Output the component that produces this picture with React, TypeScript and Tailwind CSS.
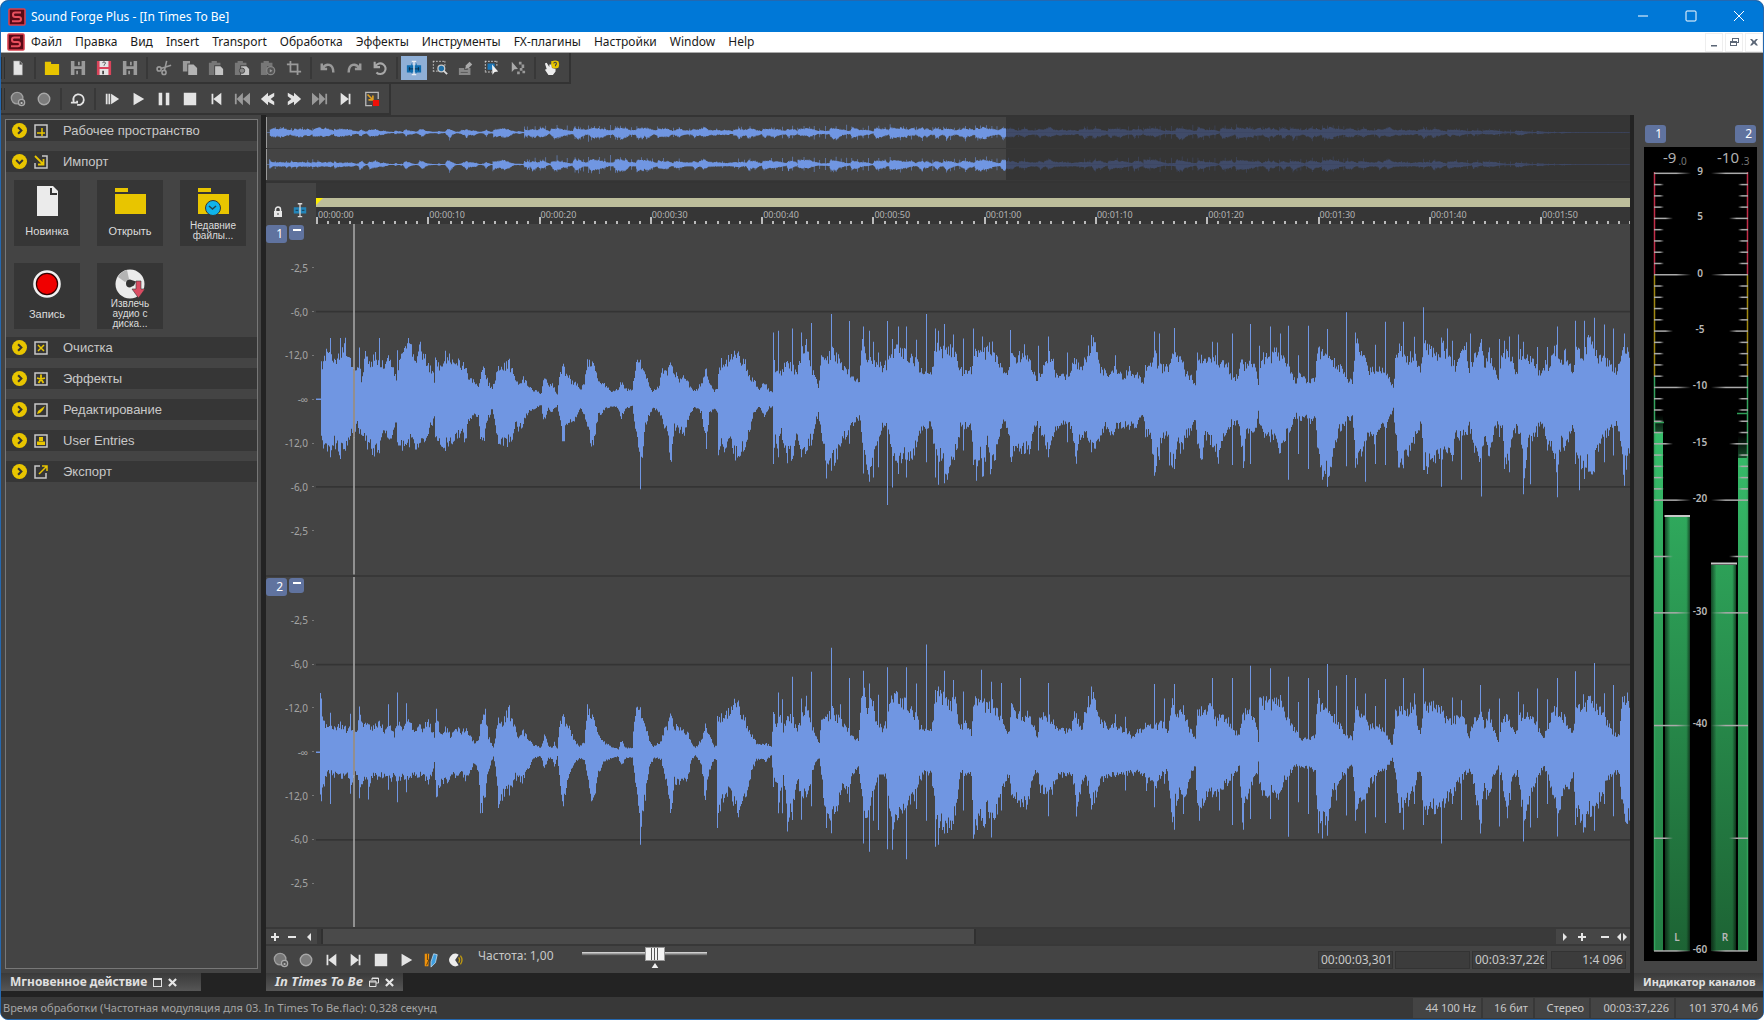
import React from 'react';

const WAVE_WIDTH = 1314;
const WAVE_HALF = 174;

// Peak data: "x,top,bottom" triples. Every track is sampled in two parts.
const TRACKS = [
  {
    id: 1,
    zero: 329,
    parts: [
      {
        offset: -6,
        scale: 2.376,
        body:
          '14,329,329 23,329,329 25,200,457 28,235,450 38,190,490 50,200,480 58,208,458 70,195,485 82,165,475 90,200,440 104,235,430 111,230,400 118,230,430 122,268,428 130,200,458 138,215,468 148,215,480 155,195,490 165,215,460 178,218,432 186,190,460 196,230,435 204,270,395 208,230,455 218,185,465 228,178,460 234,157,468 243,190,440 252,200,468 262,172,468 270,195,465 278,225,440 282,240,405 290,232,400 295,280,378 298,212,440 310,225,460 320,200,465 335,205,455 350,205,445 358,225,425 368,230,450 376,262,400 390,275,378 400,290,375 406,250,465 414,235,440 422,280,385 432,297,355 440,270,398 446,230,465 455,235,460 465,222,455 473,225,455 482,240,440 488,278,390 495,280,425 506,265,400 515,285,370 528,300,360 540,305,350 548,312,348 554,262,395 565,285,358 575,285,365 586,314,345 593,240,400 602,228,465 608,250,400 620,275,400 632,278,378 641,300,352 652,275,375 658,218,405 668,207,470 676,245,430 684,270,378 700,285,355 712,305,350 730,300,352 738,275,385 748,300,355 766,300,350 772,240,410 777,205,435 786,225,520 793,245,420 804,280,378 812,303,355 826,290,365 838,235,400 848,245,430 857,215,512 866,245,410 876,275,425 890,258,425 900,290,372 914,305,350 930,280,370 940,240,460 948,285,370 960,302,355 966,300,370 970,240,520 976,215,465 986,220,480 995,208,460 1005,200,480 1016,185,515 1026,215,470 1036,225,465 1046,265,410 1056,275,365 1066,300,350 1078,275,375 1090,305,350 1098,306,350 1099,200,470 1104,240,445 1112,230,480 1120,250,430 1132,215,500 1146,232,490 1158,248,440 1166,190,495 1178,170,470 1190,240,450 1200,262,400 1208,288,370 1214,210,440 1226,215,515 1238,180,525 1250,195,500 1262,225,450 1275,240,430 1290,260,400 1304,270,382 1312,160,450 1318,195,515 1326,210,530 1336,220,500 1348,210,450 1360,230,405 1372,220,400 1382,200,480 1396,165,520 1410,180,500 1420,200,520 1430,200,495 1445,225,450 1456,255,410 1475,250,405 1486,170,500 1500,180,505 1512,185,555 1524,180,530 1535,205,470 1545,235,430 1552,250,420 1560,240,405 1568,235,410',
        spikes:
          '47,147,500 72,147,505 116,175,430 163,147,488 207,183,455 472,208,455 785,225,595 1099,130,520 1111,125,500 1133,215,518 1145,118,505 1167,130,500 1178,150,470 1190,102,465 1227,215,563 1237,75,540 1281,96,460 1313,112,548 1327,125,573 1337,158,560 1349,190,530 1371,96,642 1382,150,590 1397,112,550 1416,112,560 1440,152,470 1463,75,515 1484,118,560 1492,125,582 1507,105,577 1528,136,500 1551,150,480',
      },
      {
        offset: 644,
        scale: 2.306,
        body:
          '0,240,400 8,245,410 25,240,415 30,175,510 38,185,545 45,185,500 52,190,535 62,175,460 70,165,530 80,190,500 88,205,440 100,250,395 112,240,430 118,190,495 130,200,480 145,190,480 160,210,485 168,250,425 178,270,405 188,240,440 202,200,490 212,190,460 218,250,420 235,260,400 252,265,395 262,200,460 268,215,500 276,235,440 285,215,430 295,180,450 302,150,485 315,180,475 323,235,430 335,245,410 350,250,430 358,235,410 375,260,405 390,240,410 405,255,405 415,265,380 423,278,385 426,235,430 440,230,435 448,180,550 456,230,480 468,235,435 480,230,440 490,195,530 500,195,460 512,205,485 520,250,440 532,262,420 542,290,395 546,200,470 556,205,510 566,215,440 578,215,460 585,190,460 595,220,500 605,215,440 616,220,430 624,265,400 640,260,400 648,205,470 652,225,530 660,225,430 672,215,425 682,245,420 688,290,370 696,200,430 706,200,450 716,210,430 726,165,450 738,200,480 750,210,440 762,240,420 775,285,375 782,240,390 798,278,378 810,270,400 818,270,380 824,180,480 836,190,540 848,200,560 860,215,480 872,225,420 885,250,415 890,270,390 905,275,385 912,160,510 920,170,500 930,205,470 942,240,430 955,240,450 970,240,415 988,260,400 998,295,355 1002,215,430 1010,170,510 1022,190,510 1034,205,490 1046,190,440 1056,235,425 1062,230,400 1067,160,520 1080,180,515 1092,175,500 1104,200,490 1112,150,510 1124,200,475 1136,210,480 1144,240,435 1156,185,440 1166,170,440 1174,240,410 1186,205,470 1200,150,540 1208,225,440 1218,180,500 1230,235,430 1240,268,400 1250,190,420 1262,190,530 1274,215,440 1284,260,410 1292,190,440 1300,185,550 1310,210,440 1322,220,450 1338,255,395 1348,220,430 1358,230,460 1368,185,480 1376,170,560 1386,215,460 1396,190,480 1406,220,420 1414,250,410 1420,180,500 1436,205,530 1446,150,530 1460,165,540 1470,200,490 1484,210,440 1500,225,420 1512,240,400 1522,210,450 1530,140,540 1536,180,520 1545,200,490',
        spikes:
          '7,148,480 30,118,510 38,185,570 50,142,558 116,123,500 148,165,490 180,170,480 202,142,500 246,190,455 302,140,485 357,198,415 447,127,555 460,133,508 482,230,525 493,117,535 580,158,470 592,160,500 627,133,523 653,225,532 669,105,520 690,170,400 715,112,455 738,133,487 757,110,567 779,198,490 802,110,535 834,190,567 846,120,588 890,70,527 912,130,528 934,205,573 957,167,520 979,98,523 1022,98,533 1046,143,460 1067,55,520 1077,180,550 1110,145,588 1122,118,480 1134,155,512 1156,185,567 1177,133,430 1201,150,617 1244,150,440 1255,155,535 1265,142,545 1286,136,430 1299,158,610 1315,200,580 1330,173,440 1354,173,480 1376,112,619 1418,95,520 1427,200,598 1439,95,565 1463,86,545 1485,106,515 1506,118,495 1532,133,585',
      },
    ],
  },
  {
    id: 2,
    zero: 368,
    parts: [
      {
        offset: -6,
        scale: 2.376,
        body:
          '14,368,368 21,368,368 24,210,510 30,280,470 40,295,430 60,290,435 72,285,440 85,300,430 95,290,465 104,300,430 112,300,430 117,235,495 128,290,440 140,285,460 150,295,440 163,270,440 175,300,435 187,280,450 200,318,440 207,270,460 218,300,440 232,275,450 244,300,430 255,290,440 268,295,435 278,275,460 290,300,435 295,325,400 299,245,495 308,310,460 325,295,450 333,320,435 345,285,440 358,305,430 370,300,450 380,318,420 390,340,400 400,330,420 406,285,545 415,245,490 422,320,420 434,355,380 440,325,405 447,265,525 456,285,505 466,250,480 473,245,490 484,285,440 492,325,445 503,300,455 515,325,420 530,345,385 545,352,378 550,352,385 555,315,415 565,348,385 574,355,385 580,340,410 588,356,378 594,265,460 602,260,520 610,285,455 620,310,420 630,335,395 640,350,385 650,335,390 658,235,430 668,245,500 676,290,480 684,310,430 695,335,395 712,350,385 732,358,380 738,330,410 748,355,385 766,355,382 771,270,440 777,225,520 786,250,575 795,290,500 805,330,415 815,350,385 826,338,385 834,338,390 840,290,430 848,290,460 857,245,560 864,290,450 874,295,460 884,305,462 895,308,450 905,340,390 914,355,375 928,330,400 938,290,510 948,320,420 960,350,385 966,350,390 970,260,580 978,260,500 988,250,510 998,250,470 1006,225,520 1017,212,555 1026,260,510 1038,285,480 1048,315,425 1060,340,390 1072,345,385 1080,340,395 1096,352,375 1099,250,460 1108,285,450 1114,240,500 1124,300,430 1134,260,560 1146,265,530 1158,300,450 1168,260,500 1178,230,500 1190,285,440 1200,318,400 1210,335,385 1214,280,440 1226,265,570 1240,240,560 1250,260,540 1262,275,480 1275,295,480 1290,320,430 1302,328,405 1310,220,480 1316,190,580 1324,240,590 1334,215,510 1345,270,460 1360,295,430 1368,280,440 1380,210,590 1394,195,560 1410,210,550 1420,225,530 1434,250,500 1448,285,450 1460,305,430 1475,300,430 1486,205,560 1496,190,590 1508,210,600 1520,230,580 1530,200,560 1540,270,470 1555,295,430 1568,295,430',
        spikes:
          '25,208,512 47,250,520 95,253,490 117,232,498 138,285,507 185,225,478 207,190,515 229,222,485 299,238,500 405,285,548 415,238,500 447,265,532 472,228,495 601,260,527 785,250,642 968,260,592 1111,190,548 1122,210,548 1133,260,602 1145,143,568 1167,208,567 1178,200,500 1190,128,527 1227,265,592 1237,57,607 1259,225,480 1281,147,515 1313,125,638 1327,163,663 1337,215,570 1349,197,598 1371,115,655 1382,210,657 1416,115,685 1440,163,535 1463,47,570 1484,183,648 1492,172,642 1507,125,608 1528,153,580 1551,188,540',
      },
      {
        offset: 644,
        scale: 2.306,
        body:
          '0,300,420 10,270,440 25,310,430 30,200,600 45,215,565 55,220,590 62,225,510 72,225,600 85,235,540 95,270,480 105,300,455 114,310,430 118,220,520 132,250,510 145,265,515 155,250,540 166,280,450 178,320,420 184,250,480 200,265,500 212,265,480 222,290,445 240,305,435 255,300,430 262,240,470 270,265,540 280,300,460 290,230,440 302,185,520 315,240,485 325,275,450 345,290,435 362,290,430 380,300,430 395,318,430 410,305,430 425,290,430 428,285,470 440,295,445 450,290,470 465,280,435 478,310,420 488,210,560 496,260,520 505,240,490 515,240,530 525,290,460 536,310,420 542,330,410 546,250,540 556,240,530 568,250,500 580,220,480 590,275,500 602,255,480 614,265,460 630,300,440 644,318,410 650,260,580 660,240,500 670,250,470 684,300,430 688,340,395 692,220,460 704,210,520 718,220,480 726,200,490 738,210,510 748,250,450 760,275,430 770,300,405 788,330,410 805,325,415 818,320,430 824,210,550 834,230,570 846,240,570 858,260,490 870,270,460 885,315,430 905,325,405 912,240,540 922,250,500 935,275,510 945,290,460 962,285,430 980,310,420 997,348,385 1002,250,430 1012,240,540 1024,240,520 1036,240,510 1046,210,470 1056,305,425 1062,300,440 1068,220,560 1078,240,540 1090,215,530 1104,230,540 1112,240,540 1122,275,510 1134,265,490 1148,270,460 1160,260,440 1174,320,420 1180,285,440 1198,240,590 1208,290,480 1218,240,510 1230,300,440 1240,335,410 1250,270,450 1262,260,560 1274,300,450 1286,310,420 1290,260,470 1300,250,580 1312,260,490 1325,280,460 1345,325,410 1355,285,440 1368,240,500 1378,240,560 1390,260,480 1404,290,470 1414,305,440 1420,240,540 1436,230,590 1450,210,540 1464,230,560 1476,240,500 1490,275,460 1505,310,430 1520,315,430 1526,180,530 1534,200,580 1545,230,560',
        spikes:
          '7,187,540 49,122,570 72,158,605 95,162,540 138,147,530 202,162,557 268,265,558 302,178,530 357,255,440 380,262,480 447,165,530 471,208,460 493,165,597 514,228,550 550,240,570 580,147,500 598,255,540 627,147,583 653,250,597 669,110,565 690,205,460 715,118,565 757,143,618 779,218,515 802,147,550 825,183,607 834,230,623 846,105,615 868,170,510 891,138,555 912,147,570 934,193,607 957,230,560 979,150,577 1022,147,597 1046,192,520 1067,118,583 1110,240,638 1134,205,520 1156,213,568 1199,168,608 1244,208,587 1286,188,440 1299,225,632 1315,260,590 1330,178,562 1354,210,520 1376,147,617 1418,127,583 1437,195,605 1463,102,600 1485,192,520 1506,168,557 1537,190,580',
      },
    ],
  },
];

type Column = [number, number];

const parse = (s: string) => s.split(' ').map((p) => p.split(',').map(Number));

const noise = (n: number) => {
  const v = Math.sin(n * 127.1 + 11.7) * 43758.5453;
  return v - Math.floor(v);
};

const buildColumns = (track: (typeof TRACKS)[number]): Column[] => {
  const columns: Column[] = Array.from({ length: WAVE_WIDTH }, () => [0, 0]);
  track.parts.forEach(({ offset, scale, body, spikes }) => {
    const points = parse(body);
    const toX = (v: number) => Math.round(v / scale + offset);
    for (let i = 0; i < points.length - 1; i++) {
      const [ax, at, ab] = points[i];
      const [bx, bt, bb] = points[i + 1];
      const from = toX(ax);
      const to = toX(bx);
      for (let x = Math.max(0, from); x < Math.min(to, WAVE_WIDTH); x++) {
        const k = (x - from) / (to - from);
        const up = (track.zero - (at + (bt - at) * k)) / 3;
        const down = (ab + (bb - ab) * k - track.zero) / 3;
        columns[x] = [up * (0.8 + noise(x) * 0.32), down * (0.8 + noise(x + 4000 * track.id) * 0.32)];
      }
    }
    parse(spikes).forEach(([sx, top, bottom]) => {
      const x = toX(sx);
      if (!columns[x]) return;
      columns[x] = [
        Math.max(columns[x][0], (track.zero - top) / 3),
        Math.max(columns[x][1], (bottom - track.zero) / 3),
      ];
    });
  });
  return columns;
};

const COLUMNS = TRACKS.map(buildColumns);

// The part of the file to the right of the visible range
const TAIL = COLUMNS.map((columns) =>
  Array.from({ length: 1103 }, (_, i): Column => {
    const [up, down] = columns[700 + (i % 600)];
    const fade = i < 720 ? 1 : Math.max(0.04, 1 - (i - 720) / 300);
    return [up * fade + 1, down * fade + 1];
  })
);

const wavePath = (columns: Column[]) => {
  const top = columns.map(([up], x) => `V${(WAVE_HALF - up).toFixed(1)}H${x + 1}`).join('');
  const bottom = columns
    .map(([, down], x) => `V${(WAVE_HALF + down + 0.6).toFixed(1)}H${x}`)
    .reverse()
    .join('');
  return `M0 ${WAVE_HALF}${top}${bottom}Z`;
};

type IconProps = { children: React.ReactNode; size?: string };

const Icon: React.FC<IconProps> = ({ children, size = 'size-[18px]' }) => (
  <svg viewBox="0 0 18 18" className={`${size} shrink-0`} fill="none" stroke="none" aria-hidden="true">
    {children}
  </svg>
);

const Logo: React.FC = () => (
  <svg viewBox="0 0 18 18" className="size-[18px] shrink-0" aria-hidden="true">
    <rect x="1" y="1" width="16" height="16" rx="1" fill="#5a0a16" stroke="#d9404f" strokeWidth="1.6" />
    <path d="M13 4.5H7.2a2.2 2.2 0 0 0 0 4.4h3.6a2.2 2.2 0 0 1 0 4.4H4" fill="none" stroke="#e8505e" strokeWidth="2" />
  </svg>
);

const LIGHT = '#e4e4e4';
const MUTED = '#9a9a9a';
const YELLOW = '#e8c500';

const ICONS: Record<string, React.ReactNode> = {
  file: <path d="M4 1h7l3 3v13H4z M11 1v4h3" fill={LIGHT} stroke="#8a8a8a" strokeWidth=".6" />,
  folder: <path d="M1 2h7v2.500h9V17H1z" fill={YELLOW} />,
  save: <path d="M1 1h16v16H1z M5 1h8v6H5z M5 10h8v7H5z M9 2h2v4H9z M7 12h2v4H7z" fill={MUTED} fillRule="evenodd" />,
  saveAs: (
    <>
      <path d="M1 1h16v16H1z" fill="#d9445a" />
      <path d="M4 1h10v7H4z M4 10h10v7H4z" fill={LIGHT} />
      <path d="M7 12h2v4H7z" fill="#444" />
      <path d="M7.500 3.500a1.500 1.500 0 1 1 2 1.500L9 6.500" stroke="#444" />
    </>
  ),
  cut: (
    <g stroke={MUTED} strokeWidth="1.800">
      <circle cx="3.500" cy="10" r="2.300" />
      <circle cx="9" cy="14" r="2.300" />
      <path d="M5.500 9.500 17 6M9.500 12 12 1" />
    </g>
  ),
  copy: (
    <>
      <path d="M1 1h8v3H6v9H1z" fill={MUTED} />
      <path d="M7 5h6l4 4v8H7z" fill="#b4b4b4" />
    </>
  ),
  paste: (
    <>
      <path d="M1 3h3V1h6v2h4v3H7v11H1z" fill="#777" />
      <path d="M8 7h6l3 3v7H8z" fill="#c4c4c4" />
    </>
  ),
  pasteNew: (
    <>
      <path d="M1 3h3V1h6v2h4v3H7v11H1z" fill="#777" />
      <path d="M8 7h6l3 3v7H8z" fill="#c4c4c4" />
      <circle cx="9" cy="12" r="3" fill="#888" stroke="#444" />
    </>
  ),
  mix: (
    <>
      <path d="M1 3h3V1h6v2h4v4H8v10H1z" fill="#777" />
      <circle cx="12" cy="12" r="4.500" fill="#555" stroke="#888" strokeWidth="1.500" />
      <path d="m11 10 3 2-3 2z" fill="#999" />
    </>
  ),
  crop: <path d="M5 1v12h12M1 5h12v12" stroke={MUTED} strokeWidth="2" />,
  undo: <path d="M2 4v6h6M3 9c4-6 12-5 12 5" stroke={MUTED} strokeWidth="2.800" />,
  redo: <path d="M16 4v6h-6M15 9C11 3 3 4 3 14" stroke={MUTED} strokeWidth="2.800" />,
  repeat: <path d="M3 2v6h6M4 7a6 6 0 1 1 1 7" stroke="#a8a8a8" strokeWidth="2.400" />,
  edit: (
    <>
      <path d="M1 6h5V4h1v2h4V4h1v2h5v8h-5v1h-1v-1H7v1H6v-1H1z" fill="#0f6cae" />
      <path d="M3 10h12M4 8v4M14 8v4" stroke="#0a2f50" />
      <path d="M6.500 1.500H9m0 0h2.500M9 1.500v15m-2.500 0h5" stroke="#e6ecf3" strokeWidth="1.500" />
    </>
  ),
  magnify: (
    <>
      <path d="M1 1.500h14M1.500 1v12M14.500 1v6M1 12.500h6" stroke="#c8c8c8" strokeDasharray="2 1.500" />
      <circle cx="10.500" cy="9.500" r="3.800" fill="#1d6fa8" stroke="#c8c8c8" strokeWidth="1.500" />
      <path d="m13 12 4 4" stroke="#d8d8d8" strokeWidth="2" />
    </>
  ),
  pencil: (
    <>
      <path d="M1 9h6v2h4V9h3v8H1z" fill="#888" />
      <path d="m8 10 1-4 4-4 3 3-4 4z" fill="#aaa" />
      <path d="M3 14h8" stroke="#555" />
    </>
  ),
  marquee: (
    <>
      <path d="M1 1.500h14M1.500 1v12M14.500 1v6M1 13.500h8" stroke="#d8d8d8" strokeDasharray="2 1.500" />
      <path d="M4 4h8v7H4z" fill="#1a76b8" />
      <path d="m9 5 7 8-4 .500-2.500 3z" fill="#f0f0f0" />
    </>
  ),
  event: (
    <>
      <path d="m2 2 7 8-4 .500-3 3z" fill="#aaa" />
      <path d="M10 2h3v3h-3zM13 5h3v4h-3zM11 9h3v3h-3zM8 13h3v3H8zM14 12h3v3h-3z" fill="#999" />
    </>
  ),
  help: (
    <>
      <path d="M8 1h8v8h-6z" fill={YELLOW} />
      <circle cx="12.500" cy="5" r="4.500" fill={YELLOW} />
      <path d="M11 4a1.500 1.500 0 1 1 2 1.500V7" stroke="#444" strokeWidth="1.200" />
      <path d="m1 4 2-1 3 5V5h2l1 4 4 1v3l-3 4H5L1 11l2-1z" fill="#ededed" />
    </>
  ),
  recordRemote: (
    <>
      <circle cx="8" cy="8" r="6.500" fill="#777" stroke="#a0a0a0" strokeWidth="1.500" />
      <circle cx="13" cy="13" r="3.500" fill="#555" stroke="#aaa" strokeWidth="1.400" />
      <path d="M12 12.500h2v2h-2z" fill="#bbb" />
    </>
  ),
  record: <circle cx="9" cy="9" r="6.500" fill="#7c7c7c" stroke="#a8a8a8" strokeWidth="1.500" />,
  loop: <path d="M8 15.500A6 6 0 1 0 4 12M4 8v6M1 13h7v-2" stroke={LIGHT} strokeWidth="2" />,
  playAll: <path d="M2 3h2v12H2zM5 3h2v12H5zM8 3l9 6-9 6z" fill={LIGHT} />,
  play: <path d="M4 2l12 7-12 7z" fill={LIGHT} />,
  pause: <path d="M3 2h4v14H3zM11 2h4v14h-4z" fill={LIGHT} />,
  stop: <path d="M2 2h14v14H2z" fill={LIGHT} />,
  start: <path d="M4 3h2v12H4zM15 2v14L6 9z" fill={LIGHT} />,
  prev: <path d="M1 3h2v12H1zM10 2v14L3 9zM18 2v14L10 9z" fill={MUTED} />,
  rewind: <path d="M9 2v4l7-4v4l-4 3 4 3v4l-7-4v4L1 9z" fill={LIGHT} />,
  forward: <path d="M9 2v4L2 2v4l4 3-4 3v4l7-4v4l8-7z" fill={LIGHT} />,
  next: <path d="M15 3h2v12h-2zM8 2v14l7-7zM0 2v14l8-7z" fill={MUTED} />,
  end: <path d="M12 3h2v12h-2zM3 2v14l9-7z" fill={LIGHT} />,
  region: (
    <>
      <path d="M2 10V1.500h14V9M2 9v7.500h7" stroke="#b8b8b8" strokeWidth="1.500" />
      <path d="m4 4 6 6M10 5v5H5" stroke="#e0a020" strokeWidth="1.800" />
      <path d="M10 10h7v7h-7z" fill="#f01008" />
    </>
  ),
  repair: (
    <>
      <path d="M2 2h5l-1 14H2z" fill="#f0920c" />
      <path d="M5 2v7M7 8 4 15" stroke="#5a3a08" />
      <path d="m12 2 4 1-2 9-5 5V11z" fill="#3f9fe0" stroke="#cfe6f5" strokeWidth=".8" />
    </>
  ),
  speaker: (
    <>
      <path d="M12 3a7 7 0 1 0 0 12L8 9z" fill="#ededed" />
      <path d="M12 6q2 3 0 6M14 4q3.500 5 0 10" stroke="#c09a10" strokeWidth="1.500" />
    </>
  ),
};

const FILE_TOOLS = [
  ['file', 'New'],
  null,
  ['folder', 'Open'],
  ['save', 'Save'],
  ['saveAs', 'Save as'],
  ['save', 'Save all'],
  null,
  ['cut', 'Cut'],
  ['copy', 'Copy'],
  ['paste', 'Paste'],
  ['pasteNew', 'Paste to new'],
  ['mix', 'Mix'],
  ['crop', 'Trim'],
  null,
  ['undo', 'Undo'],
  ['redo', 'Redo'],
  ['repeat', 'Repeat'],
  null,
  ['edit', 'Edit tool'],
  ['magnify', 'Magnify tool'],
  ['pencil', 'Pencil tool'],
  ['marquee', 'Selection tool'],
  ['event', 'Event tool'],
  null,
  ['help', 'Help'],
];

const TRANSPORT_TOOLS = [
  ['recordRemote', 'Remote record'],
  ['record', 'Record'],
  null,
  ['loop', 'Loop playback'],
  null,
  ['playAll', 'Play all'],
  ['play', 'Play'],
  ['pause', 'Pause'],
  ['stop', 'Stop'],
  ['start', 'Go to start'],
  ['prev', 'Previous marker'],
  ['rewind', 'Rewind'],
  ['forward', 'Forward'],
  ['next', 'Next marker'],
  ['end', 'Go to end'],
  ['region', 'Drop region'],
];

const MINI_TRANSPORT = ['recordRemote', 'record', 'start', 'end', 'stop', 'play', 'repair', 'speaker'];

const MENU = [
  'Файл',
  'Правка',
  'Вид',
  'Insert',
  'Transport',
  'Обработка',
  'Эффекты',
  'Инструменты',
  'FX-плагины',
  'Настройки',
  'Window',
  'Help',
];

const Toolbar: React.FC<{ tools: (string[] | null)[]; active?: string }> = ({ tools, active }) => (
  <div className="flex">
    <div className="flex h-[31px] items-center border-r-2 border-b-2 border-[#333] pr-1">
      <span className="h-[22px] w-1 border-x border-[#2f2f2f]" />
      {tools.map((tool, index) =>
        tool ? (
          <button
            key={index}
            type="button"
            aria-label={tool[1]}
            className={`flex h-6 w-[26px] items-center justify-center ${tool[0] === active ? 'bg-[#8fafd6]' : ''}`}
          >
            <Icon size="size-4">{ICONS[tool[0]]}</Icon>
          </button>
        ) : (
          <span key={index} className="mx-[3px] h-[22px] w-0.5 bg-[#383838]" />
        )
      )}
    </div>
  </div>
);

const SectionHeader: React.FC<{ title: string; icon: React.ReactNode; open?: boolean }> = ({ title, icon, open }) => (
  <button
    type="button"
    aria-expanded={!!open}
    className="flex h-[21px] w-full shrink-0 items-center bg-[#363636] pl-1.5 font-['Liberation_Sans',sans-serif] text-[13px] text-[#c8c8c8]"
  >
    <svg viewBox="0 0 16 16" className="size-[15px]" fill="none" aria-hidden="true">
      <circle cx="8" cy="8" r="8" fill={YELLOW} />
      <path d={open ? 'm4.500 6.500 3.500 3.500 3.500-3.500' : 'm6.500 4.500 3.500 3.500-3.500 3.500'} stroke="#333" strokeWidth="2.200" />
    </svg>
    <svg viewBox="0 0 14 14" className="mr-[15px] ml-[7px] size-3.5" fill="none" aria-hidden="true">
      {icon}
    </svg>
    {title}
  </button>
);

const box = <path d="M1 1h12v12H1z" stroke="#c8c8c8" strokeWidth="1.500" />;

const SECTION_ICONS = {
  workspace: (
    <>
      {box}
      <path d="M3 9h8M8 4v8" stroke={YELLOW} strokeWidth="1.500" />
    </>
  ),
  importing: (
    <>
      <path d="M8 1h5v12H1V8" stroke="#c8c8c8" strokeWidth="1.500" />
      <path d="m1 1 8 8M9.500 4v5.500H4" stroke={YELLOW} strokeWidth="1.800" />
    </>
  ),
  cleaning: (
    <>
      {box}
      <path d="m4 4 6 6M10 4l-6 6" stroke={YELLOW} strokeWidth="1.500" />
    </>
  ),
  effects: (
    <>
      {box}
      <path d="M7 2.500v4.500M3 6l4 1 4-1M4.500 11 7 7l2.500 4" stroke={YELLOW} strokeWidth="1.800" />
    </>
  ),
  editing: (
    <>
      {box}
      <path d="m3 11 1-3 4-3 3-2-2 4-3 3z" fill={YELLOW} />
    </>
  ),
  entries: (
    <>
      {box}
      <path d="M5 3h4v4H5zM3 7.500h8V11H3z" fill={YELLOW} />
    </>
  ),
  exporting: (
    <>
      <path d="M6 1H1v12h11V8" stroke="#c8c8c8" strokeWidth="1.500" />
      <path d="m5 9 8-8M8 1h5v5" stroke={YELLOW} strokeWidth="1.500" />
    </>
  ),
};

const folderShape = <path d="M0 2h13v4H0zM0 8h31v20H0z" fill={YELLOW} />;

const TILES = [
  {
    label: 'Новинка',
    icon: (
      <>
        <path d="M5 0h16l5 5v25H5z" fill="#ebebeb" />
        <path d="M19 2v6h6" stroke="#333" strokeWidth="2" />
      </>
    ),
  },
  { label: 'Открыть', icon: folderShape },
  {
    label: 'Недавние файлы...',
    small: true,
    icon: (
      <>
        {folderShape}
        <circle cx="15" cy="22" r="7.500" fill="#10b4ea" stroke="#363636" />
        <path d="m11 20 3.500 3 3.500-3" stroke="#24444f" strokeWidth="1.500" />
      </>
    ),
  },
  {
    label: 'Запись',
    icon: (
      <>
        <circle cx="15" cy="15" r="12.500" fill="#300" stroke="#f0f0f0" strokeWidth="2.600" />
        <circle cx="15" cy="15" r="10" fill="#f00000" />
      </>
    ),
  },
  {
    label: 'Извлечь аудио с диска...',
    small: true,
    icon: (
      <>
        <circle cx="15" cy="15" r="14.500" fill="#ebebeb" />
        <path d="M3 8a14 14 0 0 1 9-7l2 9-4 3z" fill="#b4b4b4" />
        <path d="M15 10.500a4 4 0 1 0 0 8l4-2 2-4z" fill="#333" />
        <path d="M21 12h5v8h4l-6.500 9-6.500-9h4z" fill="#d94c62" stroke="#363636" strokeWidth=".6" />
      </>
    ),
  },
];

const Tile: React.FC<(typeof TILES)[number]> = ({ label, icon, small }) => (
  <button
    type="button"
    className="flex h-[66px] flex-col items-center bg-[#363636] pt-1.5 font-['Liberation_Sans',sans-serif] text-[#dcdcdc]"
  >
    <svg viewBox="0 0 31 30" className="h-[30px] w-[31px] shrink-0" fill="none" aria-hidden="true">
      {icon}
    </svg>
    <span className={`flex min-h-0 flex-1 items-center ${small ? 'px-1 text-[10px] leading-[10px]' : 'text-[11px]'}`}>{label}</span>
  </button>
);

const DB_LABELS = ['-2,5', '-6,0', '-12,0', '-∞', '-12,0', '-6,0', '-2,5'];

const Channel: React.FC<{ index: number }> = ({ index }) => {
  const columns = COLUMNS[index];
  return (
    <div className="relative flex min-h-0 flex-1 border-b-2 border-[#383838]">
      <div className="flex w-[50px] shrink-0 flex-col text-right text-[10px] leading-none text-[#a4a4a4]">
        <span className="flex-1" />
        {DB_LABELS.map((label, i) => (
          <span key={i} className="flex flex-2 items-center justify-end gap-1 pr-0.5">
            {label}
            <span className="h-px w-0.5 bg-[#777]" />
          </span>
        ))}
        <span className="flex-1" />
      </div>
      <div className="absolute top-px left-0 flex items-start gap-0.5">
        <button type="button" className="h-[18px] w-[21px] rounded-[3px] bg-[#60739f] pr-1 text-right text-xs leading-[18px] text-white">
          {index + 1}
        </button>
        <button type="button" aria-label="Minimize track" className="flex h-[15px] w-[15px] justify-center rounded-[3px] bg-[#60739f] pt-1">
          <span className="h-0.5 w-2 bg-white" />
        </button>
      </div>
      <svg viewBox="0 0 1314 348" preserveAspectRatio="none" className="h-full min-w-0 flex-1" aria-hidden="true">
        <path d="M0 87H1314M0 261H1314" stroke="#343434" strokeWidth="1.500" />
        <path d="M0 174H6" stroke="#7096e2" strokeWidth="1.500" />
        <path d={wavePath(columns)} fill="#7096e2" />
        <path d="M38 0V348" stroke="#ababab" strokeWidth="1.500" />
        <path d={`M38 ${WAVE_HALF - columns[38][0]}V${WAVE_HALF + columns[38][1]}`} stroke="#8f8680" strokeWidth="1.500" />
      </svg>
    </div>
  );
};

const Overview: React.FC = () => (
  <div className="h-[68px] shrink-0 border-y-2 border-[#343434]">
    {TRACKS.map((track, i) => (
      <div key={track.id} className="flex h-8 border-b border-[#383838]">
        <span className="w-px bg-[#999]" />
        <svg viewBox="0 0 1314 348" preserveAspectRatio="none" className="h-full w-[54.2%]" aria-hidden="true">
          <path d={wavePath(COLUMNS[i])} fill="#7096e2" />
          <path d="M0 174H1314" stroke="#7096e2" strokeWidth="8" />
        </svg>
        <svg viewBox="0 0 1103 348" preserveAspectRatio="none" className="h-full min-w-0 flex-1 bg-[#353535]" aria-hidden="true">
          <path d={wavePath(TAIL[i])} fill="#404b69" />
          <path d="M0 174H1103" stroke="#3a4460" strokeWidth="8" />
        </svg>
      </div>
    ))}
  </div>
);

const RULER = ['00:00', '00:10', '00:20', '00:30', '00:40', '00:50', '01:00', '01:10', '01:20', '01:30', '01:40', '01:50'];

const Ruler: React.FC = () => (
  <div className="flex h-[41px] shrink-0">
    <div className="flex w-[50px] shrink-0 items-end justify-between pr-2 pb-1.5 pl-1.5">
      <svg viewBox="0 0 12 12" className="size-3" fill="none" aria-label="Lock">
        <path d="M2 5h8v6H2z" fill="#e8e8e8" />
        <path d="M3.500 5V3.500a2.500 2.500 0 0 1 5 0V5" stroke="#e8e8e8" strokeWidth="1.500" />
        <path d="M5.500 7h1v2h-1z" fill="#444" />
      </svg>
      <Icon size="size-4">
        <path d="M2 6h14v7H2z" fill="#2485b8" />
        <path d="M4 9.500h3M11 9.500h3" stroke="#174a68" strokeWidth="1.500" />
        <path d="M6.500 2H9m0 0h2.500M9 2v14.500m-2.500 0h5" stroke="#d8d8d8" strokeWidth="1.500" />
      </Icon>
    </div>
    <div className="flex min-w-0 flex-1 flex-col bg-[#363636] pt-[15px]">
      <div className="h-[9px] shrink-0 bg-[#bdbe9b]">
        <svg viewBox="0 0 7 7" className="size-[7px]" aria-hidden="true">
          <path d="M0 0h7L0 7z" fill="#ffee00" />
        </svg>
      </div>
      <div className="flex flex-1 overflow-hidden">
        {RULER.map((time) => (
          <div key={time} className="flex w-[8.47%] shrink-0 flex-col justify-end">
            <span className="pl-0.5 text-[9px] leading-[9px] text-[#b4b4b4]">00:{time}</span>
            <div className="flex h-[5px] items-end">
              <span className="-mt-1 h-[7px] flex-1 border-l-2 border-[#bbb]" />
              {Array.from({ length: 9 }, (_, i) => (
                <span key={i} className="h-[3px] flex-1 border-l-2 border-[#bbb]" />
              ))}
            </div>
          </div>
        ))}
      </div>
    </div>
  </div>
);

const toY = (db: number) => 127.5 - db * 11.27;

const MINOR_TICKS = Array.from({ length: 29 }, (_, i) => 8 - i).filter((db) => db % 5 !== 0);
const SHORT_TICKS = [5, -5, -15, -25, -50];
const LONG_TICKS = [9, 0, -10, -20, -30, -40, -60];
const METER_LABELS = [9, 5, 0, -5, -10, -15, -20, -30, -40, -60];

const Ticks: React.FC<{ values: number[]; length: number }> = ({ values, length }) => (
  <>
    {values.map((db) => (
      <React.Fragment key={db}>
        <rect x="10" y={toY(db) - 0.5} width={length} height="1.500" fill="url(#tickLeft)" />
        <rect x={104 - length} y={toY(db) - 0.5} width={length} height="1.500" fill="url(#tickRight)" />
      </React.Fragment>
    ))}
  </>
);

const Meter: React.FC = () => (
  <svg viewBox="0 0 113 814" className="min-h-0 w-full flex-1 bg-black" role="img" aria-label="Channel meters">
    <defs>
      <linearGradient id="level" gradientUnits="userSpaceOnUse" x1="0" y1="285" x2="0" y2="804">
        <stop offset="0" stopColor="#36bd6a" />
        <stop offset=".4" stopColor="#2f9f58" />
        <stop offset="1" stopColor="#247f45" />
      </linearGradient>
      <linearGradient id="peak" gradientUnits="userSpaceOnUse" x1="0" y1="370" x2="0" y2="804">
        <stop offset="0" stopColor="#2fa85c" />
        <stop offset="1" stopColor="#1d6334" />
      </linearGradient>
      <linearGradient id="edge">
        <stop offset="0" stopColor="#000" stopOpacity=".55" />
        <stop offset=".22" stopColor="#000" stopOpacity="0" />
        <stop offset=".85" stopColor="#000" stopOpacity="0" />
        <stop offset="1" stopColor="#000" stopOpacity=".55" />
      </linearGradient>
      <linearGradient id="tickLeft">
        <stop offset="0" stopColor="#aaa" />
        <stop offset=".6" stopColor="#aaa" />
        <stop offset="1" stopColor="#aaa" stopOpacity="0" />
      </linearGradient>
      <linearGradient id="tickRight">
        <stop offset="0" stopColor="#aaa" stopOpacity="0" />
        <stop offset=".4" stopColor="#aaa" />
        <stop offset="1" stopColor="#aaa" />
      </linearGradient>
      <linearGradient id="glow" x2="0" y2="1">
        <stop offset="0" stopColor="#36bd6a" stopOpacity="0" />
        <stop offset="1" stopColor="#36bd6a" stopOpacity=".4" />
      </linearGradient>
    </defs>
    <rect x="10" y="285" width="9" height="519" fill="url(#level)" />
    <rect x="94" y="311" width="9" height="493" fill="url(#level)" />
    <rect x="10" y="268" width="9" height="17" fill="url(#glow)" />
    <rect x="94" y="288" width="9" height="23" fill="url(#glow)" />
    <path d="M10 275.500h10M93 266.500h10" stroke="#2f9f58" strokeWidth="1.500" />
    <rect x="21" y="370" width="25" height="434" fill="url(#peak)" />
    <rect x="21" y="370" width="25" height="434" fill="url(#edge)" />
    <rect x="67" y="418" width="25" height="386" fill="url(#peak)" />
    <rect x="67" y="418" width="25" height="386" fill="url(#edge)" />
    <path d="M20.500 369H46M67 416.500H93" stroke="#c8c8c8" strokeWidth="2" />
    {[10.5, 103.5].map((x) => (
      <React.Fragment key={x}>
        <path d={`M${x} 25V128`} stroke="#c22e4a" strokeWidth="1.500" />
        <path d={`M${x} 128V229`} stroke="#a08812" strokeWidth="1.500" />
        <path d={`M${x} 229V804`} stroke="#34a35e" strokeWidth="1.500" />
      </React.Fragment>
    ))}
    <Ticks values={MINOR_TICKS} length={10} />
    <Ticks values={SHORT_TICKS} length={19} />
    <Ticks values={LONG_TICKS} length={37} />
    <g fill="#b8b8b8" fontSize="10" fontWeight="600" textAnchor="middle">
      {METER_LABELS.map((db) => (
        <text key={db} x="56" y={toY(db) + 2}>
          {db}
        </text>
      ))}
      <text x="33" y="794">
        L
      </text>
      <text x="81" y="794">
        R
      </text>
    </g>
    <g fill="#b0b0b0" fontSize="15">
      <text x="19" y="16">
        -9
        <tspan dx="2" dy="2" fontSize="10" fill="#777">
          .0
        </tspan>
      </text>
      <text x="73" y="16">
        -10
        <tspan dx="2" dy="2" fontSize="10" fill="#777">
          .3
        </tspan>
      </text>
    </g>
  </svg>
);

const ScrollButton: React.FC<{ label: string; path: string }> = ({ label, path }) => (
  <button type="button" aria-label={label} className="flex h-full w-[17px] items-center justify-center bg-[#464646]">
    <svg viewBox="0 0 10 10" className="size-[10px]" aria-hidden="true">
      <path d={path} fill="#e6e6e6" />
    </svg>
  </button>
);

const PLUS = 'M4 1h2v3h3v2H6v3H4V6H1V4h3z';
const MINUS = 'M1 4h8v2H1z';

const Tab: React.FC<{ title: string; className: string; children?: React.ReactNode }> = ({ title, className, children }) => (
  <div
    className={`flex h-[18px] items-center gap-1.5 overflow-hidden bg-linear-to-b from-[#3a3a3a] to-[#565656] font-bold whitespace-nowrap text-[#e0e0e0] ${className}`}
  >
    {title}
    {children}
  </div>
);

const CloseButton: React.FC = () => (
  <button type="button" aria-label="Close tab">
    <svg viewBox="0 0 10 10" className="size-[9px]" aria-hidden="true">
      <path d="m1 1 8 8M9 1 1 9" stroke="#e6e6e6" strokeWidth="2.400" />
    </svg>
  </button>
);

const QuickActions: React.FC = () => (
  <aside className="flex w-[260px] shrink-0 flex-col">
    <div className="flex min-h-0 flex-1 flex-col pt-1 pr-[3px] pb-1 pl-1">
      <div className="flex flex-1 flex-col gap-2.5 border border-[#777]">
        <SectionHeader title="Рабочее пространство" icon={SECTION_ICONS.workspace} />
        <div className="flex flex-col gap-2">
          <SectionHeader title="Импорт" icon={SECTION_ICONS.importing} open />
          <div className="-mb-0.5 grid grid-cols-3 gap-[17px] pr-[11px] pl-2">
            {TILES.map((tile) => (
              <Tile key={tile.label} {...tile} />
            ))}
          </div>
        </div>
        <SectionHeader title="Очистка" icon={SECTION_ICONS.cleaning} />
        <SectionHeader title="Эффекты" icon={SECTION_ICONS.effects} />
        <SectionHeader title="Редактирование" icon={SECTION_ICONS.editing} />
        <SectionHeader title="User Entries" icon={SECTION_ICONS.entries} />
        <SectionHeader title="Экспорт" icon={SECTION_ICONS.exporting} />
      </div>
    </div>
    <div className="flex h-6 bg-[#232323]">
      <Tab title="Мгновенное действие" className="pr-6 pl-[9px] text-xs">
        <button type="button" aria-label="Dock" className="size-[9px] border border-t-2 border-[#e0e0e0]" />
        <CloseButton />
      </Tab>
    </div>
  </aside>
);

const TimeBox: React.FC<{ value: string; label: string }> = ({ value, label }) => (
  <input
    readOnly
    aria-label={label}
    value={value}
    className="h-[18px] w-[75px] border border-[#333] bg-[#3c3c3c] px-0.5 text-right text-xs text-[#c8c8c8]"
  />
);

const Editor: React.FC = () => (
  <main className="flex min-w-0 flex-1 flex-col">
    <Overview />
    <Ruler />
    <Channel index={0} />
    <Channel index={1} />
    <div className="flex h-[17px] shrink-0 items-center border-b-2 border-[#383838] bg-[#3a3a3a]">
      <ScrollButton label="Zoom in level" path={PLUS} />
      <ScrollButton label="Zoom out level" path={MINUS} />
      <ScrollButton label="Scroll left" path="M7 1v8L3 5z" />
      <div className="flex h-full flex-1 pl-1">
        <div className="h-full w-[53%] border-x-2 border-[#303030] bg-[#4a4a4a]" />
      </div>
      <ScrollButton label="Scroll right" path="M3 1v8l4-4z" />
      <ScrollButton label="Zoom in time" path={PLUS} />
      <span className="h-full w-1.5 bg-[#464646]" />
      <ScrollButton label="Zoom out time" path={MINUS} />
      <ScrollButton label="Fit" path="M4 1v8L0 5zM6 1v8l4-4z" />
    </div>
    <div className="flex h-[27px] shrink-0 items-center pr-1 pl-0.5 text-xs text-[#c8c8c8]">
      {MINI_TRANSPORT.map((name) => (
        <button key={name} type="button" aria-label={name} className="flex w-[25px] justify-center">
          <Icon size="size-4">{ICONS[name]}</Icon>
        </button>
      ))}
      <label htmlFor="rate" className="mb-2 ml-2.5 w-[104px]">
        Частота: 1,00
      </label>
      <div className="relative mb-3 h-[14px] w-[125px]">
        <input
          id="rate"
          type="range"
          min="0"
          max="100"
          defaultValue="60"
          className="block h-[14px] w-full appearance-none bg-linear-to-b from-transparent from-[38%] via-[#d8d8d8] via-[38%] to-transparent to-[62%] [&::-webkit-slider-thumb]:h-[14px] [&::-webkit-slider-thumb]:w-5 [&::-webkit-slider-thumb]:appearance-none [&::-webkit-slider-thumb]:border [&::-webkit-slider-thumb]:border-[#999] [&::-webkit-slider-thumb]:bg-[linear-gradient(90deg,#f4f4f4_5px,#555_5px,#555_6px,#f4f4f4_6px,#f4f4f4_8px,#555_8px,#555_9px,#f4f4f4_9px,#f4f4f4_11px,#555_11px,#555_12px,#f4f4f4_12px)]"
        />
        <svg viewBox="0 0 8 6" className="absolute top-4 left-[69px] h-[5px] w-2" aria-hidden="true">
          <path d="m4 0 4 6H0z" fill="#f0f0f0" />
        </svg>
      </div>
      <div className="ml-auto flex gap-0.5">
        <TimeBox label="Position" value="00:00:03,301" />
        <TimeBox label="Selection end" value="" />
        <TimeBox label="Length" value="00:03:37,226" />
        <span />
        <TimeBox label="Zoom ratio" value="1:4 096" />
      </div>
    </div>
    <div className="flex h-6 shrink-0 bg-[#232323]">
      <Tab title="In Times To Be" className="px-[9px] text-[13px] italic">
        <button type="button" aria-label="Restore">
          <svg viewBox="0 0 10 10" className="size-[10px]" fill="none" stroke="#e0e0e0" aria-hidden="true">
            <path d="M3 3V1h6.500v5H7M.500 4H7v5.500H.500zM.500 5H7M3 1.500h6.500" />
          </svg>
        </button>
        <CloseButton />
      </Tab>
    </div>
  </main>
);

const Chip: React.FC<{ children: React.ReactNode }> = ({ children }) => (
  <button type="button" className="h-[18px] w-[21px] rounded-[3px] bg-[#60739f] pr-1 text-right text-xs leading-[18px] text-white">
    {children}
  </button>
);

const MeterPanel: React.FC = () => (
  <aside className="flex w-[129px] shrink-0 flex-col">
    <div className="flex min-h-0 flex-1 flex-col gap-1 pt-2.5 pr-1.5 pb-3 pl-2.5">
      <div className="flex justify-between px-px">
        <Chip>1</Chip>
        <Chip>2</Chip>
      </div>
      <Meter />
    </div>
    <div className="h-6 shrink-0 bg-[#232323]">
      <Tab title="Индикатор каналов" className="w-full pl-[9px] text-[11px]" />
    </div>
  </aside>
);

const STATUS = [
  { text: '44 100 Hz', width: 'w-[68px]' },
  { text: '16 бит', width: 'w-[50px]' },
  { text: 'Стерео', width: 'w-[54px]' },
  { text: '00:03:37,226', width: 'w-[83px]' },
  { text: '101 370,4 Мб', width: 'w-[87px]' },
];

const MENU_WINDOW_ICONS = [
  ['Minimize document', 'M2 8h6v1.500H2z'],
  ['Restore document', 'M3 1h7v5H8v3H1V4h2zM4 2v2h4v1h1V2zM2 6v2h5V6z'],
  ['Close document', 'M1 2h2l2 2 2-2h2L6.500 5 9 8.500H7l-2-2-2 2H1L3.500 5z'],
];

const App: React.FC = () => (
  <div className="flex h-screen flex-col overflow-hidden rounded-lg border border-[#2468b0] bg-[#444] font-['Noto_Sans','Liberation_Sans',sans-serif]">
    <header className="flex h-[31px] shrink-0 items-center bg-[#0078d7] pl-[7px] text-xs text-white">
      <Logo />
      <h1 className="ml-[5px]">Sound Forge Plus - [In Times To Be]</h1>
      <div className="ml-auto flex">
        {['M4 8h10', 'M5 3h8a1 1 0 0 1 1 1v8a1 1 0 0 1-1 1H5a1 1 0 0 1-1-1V4a1 1 0 0 1 1-1z', 'm4 3 10 10M14 3 4 13'].map(
          (path, i) => (
            <button
              key={path}
              type="button"
              aria-label={['Minimize', 'Maximize', 'Close'][i]}
              className="flex h-[31px] w-12 items-center justify-center"
            >
              <Icon>
                <path d={path} stroke="#fff" />
              </Icon>
            </button>
          )
        )}
      </div>
    </header>
    <nav className="flex h-[21px] shrink-0 items-center border-b border-[#aaa] bg-white pl-1.5 text-xs text-[#1a1a1a]">
      <Logo />
      <div className="ml-1.5 flex gap-[13px]">
        {MENU.map((item) => (
          <button key={item} type="button">
            {item}
          </button>
        ))}
      </div>
      <div className="ml-auto flex gap-0.5">
        {MENU_WINDOW_ICONS.map(([label, path]) => (
          <button key={label} type="button" aria-label={label} className="flex h-[19px] w-[18px] items-center justify-center border border-[#eee]">
            <svg viewBox="0 0 11 11" className="size-[11px]" aria-hidden="true">
              <path d={path} fill="#5b6676" fillRule="evenodd" />
            </svg>
          </button>
        ))}
      </div>
    </nav>
    <Toolbar tools={FILE_TOOLS} active="edit" />
    <Toolbar tools={TRANSPORT_TOOLS} />
    <div className="flex min-h-0 flex-1">
      <QuickActions />
      <div className="w-[5px] shrink-0 bg-[#232323]" />
      <Editor />
      <div className="w-1 shrink-0 bg-[#232323]" />
      <MeterPanel />
    </div>
    <footer className="flex h-[22px] shrink-0 items-center bg-[#383838] pl-0.5 text-[11px] text-[#a4a4a4]">
      <p>Время обработки (Частотная модуляция для 03. In Times To Be.flac): 0,328 секунд</p>
      <div className="ml-auto flex gap-0.5 text-[#c8c8c8]">
        {STATUS.map(({ text, width }) => (
          <span key={text} className={`${width} bg-[#444] pr-[5px] text-right leading-5 whitespace-nowrap`}>
            {text}
          </span>
        ))}
      </div>
    </footer>
  </div>
);

export default App;
